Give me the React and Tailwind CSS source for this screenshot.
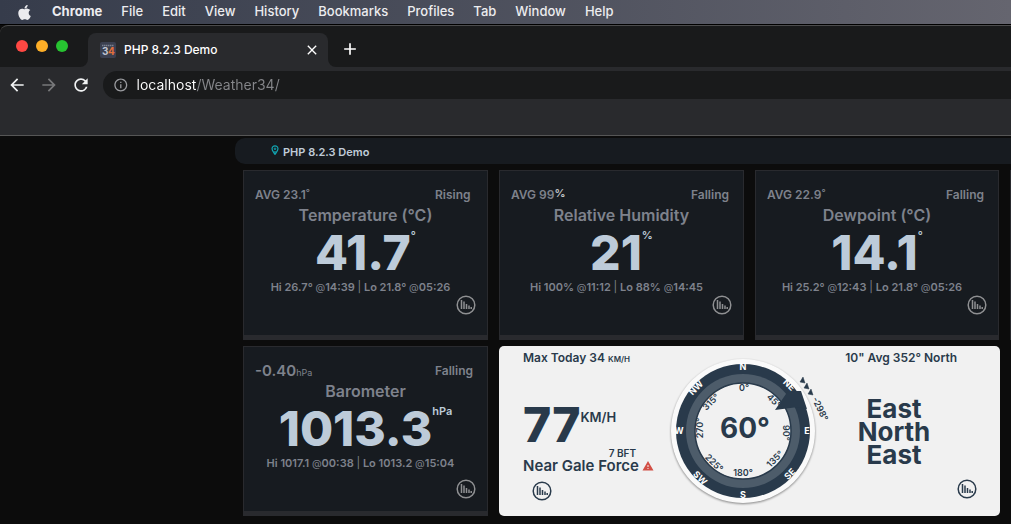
import { FaApple } from 'react-icons/fa'
import { MdAdd, MdArrowBack, MdArrowForward, MdClose, MdInfoOutline, MdRefresh, MdWarning } from 'react-icons/md'

const MENU = ['File', 'Edit', 'View', 'History', 'Bookmarks', 'Profiles', 'Tab', 'Window', 'Help']

const POINTS = [
  { label: 'N', x: 0, y: -64, r: 0 },
  { label: 'NE', x: 46, y: -46, r: 45 },
  { label: 'E', x: 64, y: 0, r: 0 },
  { label: 'SE', x: 47, y: 43, r: -45 },
  { label: 'S', x: 0, y: 64, r: 0 },
  { label: 'SW', x: -43, y: 47, r: 45 },
  { label: 'W', x: -64, y: 0, r: 0 },
  { label: 'NW', x: -47, y: -43, r: -45 },
]

const DEGREES = [
  { label: '0°', x: 1, y: -43, r: 0 },
  { label: '45°', x: 31, y: -30, r: 45 },
  { label: '90°', x: 43, y: 2, r: 90 },
  { label: '135°', x: 32, y: 28, r: -45 },
  { label: '180°', x: 0, y: 42, r: 0 },
  { label: '225°', x: -29, y: 32, r: 45 },
  { label: '270°', x: -43, y: -3, r: -90 },
  { label: '315°', x: -32, y: -29, r: -45 },
]

export default function App() {
  return (
    <div className="min-h-screen overflow-hidden bg-[#0c0c0c] font-['Inter','Liberation_Sans',sans-serif]">
      <MenuBar />
      <Browser />
      <Dashboard />
    </div>
  )
}

function MenuBar() {
  return (
    <nav className="flex h-6 items-center gap-[19px] bg-linear-to-r from-[#363c4b] to-[#65656f] pl-4 text-[13px] font-medium text-[#ececef]">
      <button aria-label="Apple"><FaApple className="size-[17px]" /></button>
      <button className="font-bold">Chrome</button>
      {MENU.map(item => <button key={item}>{item}</button>)}
    </nav>
  )
}

function Browser() {
  return (
    <header className="border-t border-black">
      <div className="rounded-tl-lg border-t border-[#4b4b4c] bg-[#191a1b]">
        <div className="flex h-[41px] items-end">
          <div className="flex gap-2 self-start pt-[14px] pl-4">
            <button aria-label="Close window" className="size-3 rounded-full bg-[#ff4843]" />
            <button aria-label="Minimize window" className="size-3 rounded-full bg-[#fdae27]" />
            <button aria-label="Zoom window" className="size-3 rounded-full bg-[#27c331]" />
          </div>
          <TabCorner />
          <div className="flex h-[34px] w-60 items-center rounded-t-lg bg-[#292a2d] px-3 text-xs font-medium text-white">
            <Favicon />
            <span className="ml-2 flex-1">PHP 8.2.3 Demo</span>
            <button aria-label="Close tab"><MdClose className="-mr-1 size-4" /></button>
          </div>
          <TabCorner flip />
          <button aria-label="New tab" className="mb-2 ml-1 text-white"><MdAdd className="size-5" /></button>
        </div>
      </div>
      <div className="h-[69px] border-b border-[#565656] bg-[#292a2d]">
        <div className="flex items-center pt-1 pl-[7px] text-[#f1f3f4]">
          <button aria-label="Back"><MdArrowBack className="size-5" /></button>
          <button aria-label="Forward" className="ml-3 text-[#77787a]"><MdArrowForward className="size-5" /></button>
          <button aria-label="Reload" className="ml-3"><MdRefresh className="size-5" /></button>
          <label className="ml-3 flex h-7 flex-1 items-center rounded-l-full bg-[#191a1b] pl-[10px]">
            <MdInfoOutline className="size-4 text-[#9b9ca0]" />
            <input
              aria-label="Address"
              defaultValue="localhost/Weather34/"
              className="ml-2 w-full bg-linear-to-r from-white from-[60px] to-[#85868a] to-[60px] bg-clip-text text-sm text-transparent outline-none"
            />
          </label>
        </div>
      </div>
    </header>
  )
}

function TabCorner({ flip }) {
  return (
    <svg viewBox="0 0 8 8" className={flip ? 'size-2 -scale-x-100' : 'ml-3 size-2'} aria-hidden="true">
      <path d="M8 0v8H0a8 8 0 0 0 8-8z" fill="#292a2d" />
    </svg>
  )
}

function Favicon() {
  return (
    <svg viewBox="0 0 16 16" className="size-4" aria-hidden="true">
      <rect width="16" height="16" rx="2" fill="#3b4050" />
      <path d="M2 3.5h12" stroke="#7b8190" strokeWidth="1.5" strokeDasharray="1.5 .5" />
      <text x="2" y="13" fontSize="10" fontWeight="700" fill="#c0c5d2">3</text>
      <text x="8" y="13" fontSize="10" fontWeight="700" fill="#e3703c">4</text>
    </svg>
  )
}

function Dashboard() {
  return (
    <main className="pt-[2px]">
      <div className="ml-[235px] flex h-[26px] items-center gap-1 rounded-l-[10px] bg-[#171b20] pt-[2px] pl-9 text-[11px] font-semibold text-[#c0ccd8]">
        <svg viewBox="0 0 8 10" className="mb-1 h-[10px] w-2" fill="none" stroke="#12a5b2" aria-hidden="true">
          <path d="M4 9.3C2.8 7.5 1 5.6 1 3.8a3 3 0 0 1 6 0C7 5.6 5.2 7.5 4 9.3z" strokeWidth="1.2" />
          <circle cx="4" cy="3.8" r=".8" strokeWidth="1" />
          <path d="M4 6v3" strokeWidth="1.2" />
        </svg>
        <span>PHP 8.2.3 Demo</span>
      </div>
      <div className="mt-[6px] ml-[243px] grid grid-cols-[245px_245px_244px_245px] gap-x-[11px] gap-y-[6px]">
        <Tile
          avg="AVG 23.1" avgUnit={<sup className="top-[-3px] text-[9px]">°</sup>} trend="Rising"
          title="Temperature (°C)" value="41.7" unit="°"
          hi="26.7°" hiAt="14:39" lo="21.8°" loAt="05:26"
        />
        <Tile
          avg="AVG 99" avgUnit={<sup className="top-[-2px] text-[11px] text-[#c3c5c9]">%</sup>} trend="Falling"
          title="Relative Humidity" value="21" unit="%"
          hi="100%" hiAt="11:12" lo="88%" loAt="14:45"
        />
        <Tile
          avg="AVG 22.9" avgUnit={<sup className="top-[-3px] text-[9px]">°</sup>} trend="Falling"
          title="Dewpoint (°C)" value="14.1" unit="°"
          hi="25.2°" hiAt="12:43" lo="21.8°" loAt="05:26"
        />
        <div className="border border-b-[5px] border-[#292a2e] bg-[#171b20]" />
        <Tile
          avg={<span className="text-[15px]">-0.40</span>} avgUnit={<span className="text-[9px] font-normal">hPa</span>} trend="Falling"
          title="Barometer" value="1013.3" unit="hPa" low
          hi="1017.1" hiAt="00:38" lo="1013.2" loAt="15:04"
        />
        <Wind />
      </div>
    </main>
  )
}

function Tile({ avg, avgUnit, trend, title, value, unit, hi, hiAt, lo, loAt, low }) {
  return (
    <section className="h-[170px] border border-b-[5px] border-[#292a2e] bg-[#171b20] px-[11px] pt-[14px] text-center font-semibold text-[#7e828c]">
      <div className="flex h-5 items-center justify-between text-[12px]">
        <span>{avg}{avgUnit}</span>
        <span className="w-[41px] text-left">{trend}</span>
      </div>
      <h2 className="text-base leading-5">{title}</h2>
      <div className="flex h-14 items-start justify-center text-[#bdcbd9]">
        <span className="text-5xl leading-14 font-extrabold">{value}</span>
        <span className="pt-[2px] text-[11px] leading-4">{unit}</span>
      </div>
      <p className="pr-[10px] text-[11px] leading-3 whitespace-nowrap">
        Hi {hi} <At />{hiAt} <span className="font-normal">|</span> Lo {lo} <At />{loAt}
      </p>
      <div className={low ? 'flex justify-end pt-[10px]' : 'flex justify-end pt-[2px]'}>
        <ChartButton />
      </div>
    </section>
  )
}

function At() {
  return <span className="text-[10px] font-normal">@</span>
}

function ChartButton() {
  return (
    <button aria-label="Charts" className="text-[#8f9092] in-[.wind]:text-[#293a4b]">
      <svg viewBox="0 0 20 20" className="size-5" fill="none" stroke="currentColor">
        <circle cx="10" cy="10" r="8.8" strokeWidth="1.5" />
        <path d="M5.5 5v9M8 6.5V14M10.5 9v5M13 10.5V14M15.2 12v2" strokeWidth="1.5" />
      </svg>
    </button>
  )
}

function Wind() {
  return (
    <section className="wind col-span-2 flex h-[170px] w-[501px] rounded-[5px] bg-[#f1f1f1] font-semibold text-[#293a4b]">
      <div className="w-[161px] pt-1 pl-6 whitespace-nowrap">
        <p className="text-[12px] leading-4">Max Today 34 <span className="text-[8px]">KM/H</span></p>
        <div className="mt-[34px] flex h-[46px]">
          <span className="text-5xl font-extrabold">77</span>
          <span className="pt-[6px] text-[13px] leading-5">KM/H</span>
        </div>
        <p className="pr-6 text-right text-[10px] leading-3">7 BFT</p>
        <p className="flex items-center gap-[3px] text-[15px] leading-[14px]">
          Near Gale Force <MdWarning className="size-3 text-[#d24f45]" />
        </p>
        <div className="pt-2 pl-[9px]"><ChartButton /></div>
      </div>
      <Compass />
      <div className="flex flex-1 flex-col pt-1 pr-[23px]">
        <p className="pr-5 text-right text-[12px] leading-4">10" Avg 352° North</p>
        <p className="mt-[31px] w-32 text-center text-[26px] leading-[23px] font-bold">East North East</p>
        <div className="flex justify-end pt-[13px]"><ChartButton /></div>
      </div>
    </section>
  )
}

function Compass() {
  return (
    <svg viewBox="-83 -85 170 170" className="h-[170px] w-[170px] overflow-visible" role="img" aria-label="Wind direction 60°">
      <circle r="72" fill="#fafafa" className="drop-shadow-[0_1px_1px_rgba(0,0,0,0.45)]" />
      <circle r="67" fill="#293a4b" />
      <circle r="57" fill="#4d5c6a" />
      <circle r="48" fill="#f1f1f1" stroke="#293a4b" strokeWidth="1.5" />
      <path d="M32-21L45-40L58-40L64-22L55-24Z" fill="#293a4b" />
      <g fontSize="9" fontWeight="700" fill="#fff" textAnchor="middle">
        {POINTS.map(p => (
          <text key={p.label} transform={`translate(${p.x} ${p.y}) rotate(${p.r})`} y="3">{p.label}</text>
        ))}
      </g>
      <g fontSize="9" fontWeight="600" fill="#293a4b" textAnchor="middle">
        {DEGREES.map(d => (
          <text key={d.label} transform={`translate(${d.x} ${d.y}) rotate(${d.r})`} y="3">{d.label}</text>
        ))}
        <text transform="translate(77 -22) rotate(64)" y="3">-298°</text>
      </g>
      <text x="2" y="7" fontSize="28" fontWeight="700" fill="#293a4b" textAnchor="middle">60°</text>
      <path d="M57-49L60-54L62-48ZM61-43L64-48L66-42ZM65-37L68-42L70-36Z" fill="#293a4b" stroke="#293a4b" strokeWidth=".5" />
    </svg>
  )
}
